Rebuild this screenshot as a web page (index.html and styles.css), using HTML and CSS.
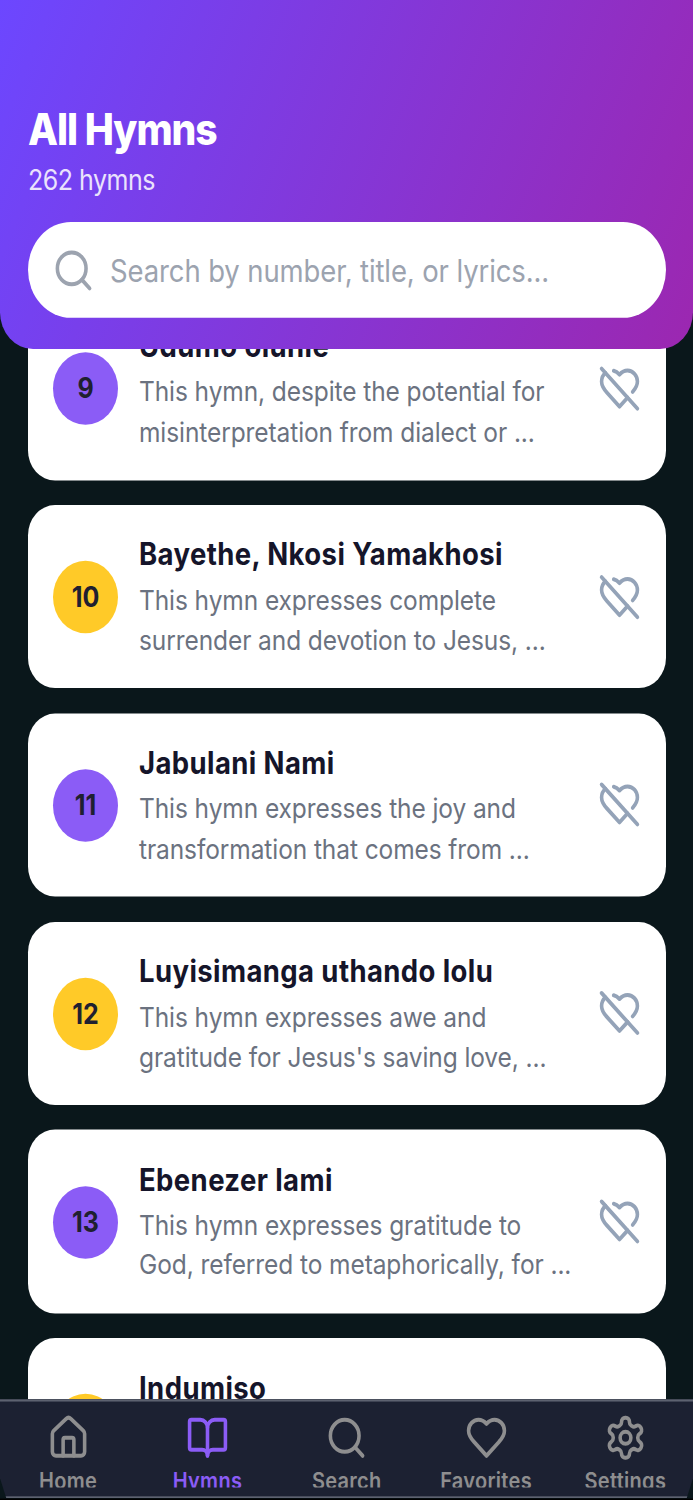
FILE: index.html
```html
<!DOCTYPE html>
<html lang="en">
<head>
<meta charset="utf-8">
<title>All Hymns</title>
<link rel="stylesheet" href="styles.css">
</head>
<body>
<svg class="defs" width="0" height="0" aria-hidden="true">
  <symbol id="search" viewBox="0 0 24 24"><circle cx="11" cy="11" r="8"/><path d="m21 21-4.3-4.3"/></symbol>
  <symbol id="heart-off" viewBox="0 0 24 24"><path d="M2 2 22 22"/><path d="M16.5 16.5 12 21l-7-7c-1.5-1.45-3-3.2-3-5.5a5.5 5.5 0 0 1 2.14-4.35"/><path d="M8.76 3.1c1.15.22 2.13.78 3.24 1.9 1.5-1.5 2.74-2 4.5-2A5.5 5.5 0 0 1 22 8.5c0 2.12-1.3 3.78-2.67 5.17"/></symbol>
</svg>
<div class="app">
  <header class="header">
    <h1 class="title">All Hymns</h1>
    <p class="count">262 hymns</p>
    <div class="search"><svg class="icon"><use href="#search"/></svg><span>Search by number, title, or lyrics...</span></div>
  </header>
  <main class="list">
    <article class="card">
      <div class="num violet">9</div>
      <div class="body"><h2>Udumo olunle</h2><p>This hymn, despite the potential for<br>misinterpretation from dialect or ...</p></div>
      <svg class="icon fav"><use href="#heart-off"/></svg>
    </article>
    <article class="card">
      <div class="num amber">10</div>
      <div class="body"><h2>Bayethe, Nkosi Yamakhosi</h2><p>This hymn expresses complete<br>surrender and devotion to Jesus, ...</p></div>
      <svg class="icon fav"><use href="#heart-off"/></svg>
    </article>
    <article class="card">
      <div class="num violet">11</div>
      <div class="body"><h2>Jabulani Nami</h2><p>This hymn expresses the joy and<br>transformation that comes from ...</p></div>
      <svg class="icon fav"><use href="#heart-off"/></svg>
    </article>
    <article class="card">
      <div class="num amber">12</div>
      <div class="body"><h2>Luyisimanga uthando lolu</h2><p>This hymn expresses awe and<br>gratitude for Jesus's saving love, ...</p></div>
      <svg class="icon fav"><use href="#heart-off"/></svg>
    </article>
    <article class="card">
      <div class="num violet">13</div>
      <div class="body"><h2>Ebenezer lami</h2><p>This hymn expresses gratitude to<br>God, referred to metaphorically, for ...</p></div>
      <svg class="icon fav"><use href="#heart-off"/></svg>
    </article>
    <article class="card">
      <div class="num amber"></div>
      <div class="body"><h2>Indumiso</h2></div>
    </article>
  </main>
  <nav class="tabs">
    <a class="tab"><svg class="icon" viewBox="0 0 24 24"><path d="M15 21v-8a1 1 0 0 0-1-1h-4a1 1 0 0 0-1 1v8"/><path d="M3 10a2 2 0 0 1 .709-1.528l7-5.999a2 2 0 0 1 2.582 0l7 5.999A2 2 0 0 1 21 10v9a2 2 0 0 1-2 2H5a2 2 0 0 1-2-2z"/></svg><span>Home</span></a>
    <a class="tab active"><svg class="icon" viewBox="0 0 24 24"><path d="M12 7v14"/><path d="M3 18a1 1 0 0 1-1-1V4a1 1 0 0 1 1-1h5a4 4 0 0 1 4 4 4 4 0 0 1 4-4h5a1 1 0 0 1 1 1v13a1 1 0 0 1-1 1h-6a3 3 0 0 0-3 3 3 3 0 0 0-3-3z"/></svg><span>Hymns</span></a>
    <a class="tab"><svg class="icon"><use href="#search"/></svg><span>Search</span></a>
    <a class="tab"><svg class="icon" viewBox="0 0 24 24"><path d="M19 14c1.49-1.46 3-3.21 3-5.5A5.5 5.5 0 0 0 16.5 3c-1.76 0-3 .5-4.5 2-1.5-1.5-2.74-2-4.5-2A5.5 5.5 0 0 0 2 8.5c0 2.3 1.5 4.05 3 5.5l7 7Z"/></svg><span>Favorites</span></a>
    <a class="tab"><svg class="icon" viewBox="0 0 24 24"><path d="M12.22 2h-.44a2 2 0 0 0-2 2v.18a2 2 0 0 1-1 1.73l-.43.25a2 2 0 0 1-2 0l-.15-.08a2 2 0 0 0-2.73.73l-.22.38a2 2 0 0 0 .73 2.73l.15.1a2 2 0 0 1 1 1.72v.51a2 2 0 0 1-1 1.74l-.15.09a2 2 0 0 0-.73 2.73l.22.38a2 2 0 0 0 2.73.73l.15-.08a2 2 0 0 1 2 0l.43.25a2 2 0 0 1 1 1.73V20a2 2 0 0 0 2 2h.44a2 2 0 0 0 2-2v-.18a2 2 0 0 1 1-1.73l.43-.25a2 2 0 0 1 2 0l.15.08a2 2 0 0 0 2.73-.73l.22-.39a2 2 0 0 0-.73-2.73l-.15-.08a2 2 0 0 1-1-1.74v-.5a2 2 0 0 1 1-1.74l.15-.09a2 2 0 0 0 .73-2.73l-.22-.38a2 2 0 0 0-2.73-.73l-.15.08a2 2 0 0 1-2 0l-.43-.25a2 2 0 0 1-1-1.73V4a2 2 0 0 0-2-2z"/><circle cx="12" cy="12" r="3"/></svg><span>Settings</span></a>
  </nav>
</div>
</body>
</html>
```
FILE: styles.css
```css
* { box-sizing: border-box; margin: 0; padding: 0; }
html { height: 1500px; overflow: hidden; background: #000; }
body { height: 1500px; overflow: hidden; font-family: Inter, "Liberation Sans", sans-serif; }
.defs { display: block; }

/* The whole screen is laid out at 1343.5px tall and stretched to the window. */
.app {
  width: 693px;
  height: 1343.5px;
  display: flex;
  flex-direction: column;
  overflow: hidden;
  background: #0a171b;
  transform: scale(1, 1.115);
  transform-origin: 0 0;
}
.icon {
  flex: none;
  width: 43px;
  height: 43px;
  fill: none;
  stroke: currentColor;
  stroke-width: 2;
  stroke-linecap: round;
  stroke-linejoin: round;
}

.header {
  flex: none;
  position: relative;
  z-index: 1;
  height: 313px;
  padding: 92px 27px 0 28px;
  border-radius: 0 0 33px 33px;
  background: linear-gradient(114.3deg, #6c47ff, #9c27b0);
  color: #fff;
}
.title { font-size: 39px; line-height: 48px; font-weight: 800; letter-spacing: -1px; }
.count { margin-top: 6px; font-size: 25px; line-height: 30px; letter-spacing: -0.5px; opacity: .85; }
.search {
  display: flex;
  align-items: center;
  gap: 15px;
  height: 86px;
  margin-top: 23px;
  padding-left: 24px;
  border-radius: 43px;
  background: #fff;
  color: #9ca3af;
  font-size: 27.5px;
  letter-spacing: -0.12px;
}
.search span { padding-top: 2px; }

.list { flex: 1; min-height: 0; margin-top: -47px; overflow: hidden; padding: 0 27px 0 28px; }
.card {
  display: flex;
  align-items: flex-start;
  height: 164.5px;
  margin-bottom: 22.35px;
  padding: 0 25px;
  border-radius: 27px;
  background: #fff;
}
.num {
  flex: none;
  width: 65px;
  height: 65px;
  margin: 50.2px 21px 0 0;
  border-radius: 50%;
  color: #1f2030;
  font-size: 25px;
  line-height: 65px;
  font-weight: 700;
  text-align: center;
}
.violet { background: #8b5cf6; }
.amber { background: #ffca28; }
.body { flex: 1; padding-top: 27.3px; white-space: nowrap; }
.body h2 { color: #15152a; font-size: 27.5px; line-height: 34px; font-weight: 700; letter-spacing: 0.4px; }
.body p { margin-top: 7px; color: #6b7280; font-size: 24.5px; line-height: 35.7px; letter-spacing: -0.09px; }
.fav { margin-top: 60.7px; color: #94a3b8; }

.tabs {
  flex: none;
  display: flex;
  height: 89px;
  border-top: 2px solid #5d6270;
  border-bottom: 2px solid #5d6270;
  background: #1c2132;
  color: #8e8e8f;
  clip-path: polygon(0 0, 100% 0, 100% 80%, 99.1% 100%, .9% 100%, 0 80%);
}
.tab { flex: none; width: 139.3px; display: flex; flex-direction: column; align-items: center; padding-top: 11px; }
.tab:first-child { margin-left: -1.5px; }
.tab span { height: 20px; margin-top: 3px; overflow: hidden; font-size: 20px; line-height: 28px; font-weight: 600; letter-spacing: 0.3px; }
.active { color: #8b5cf6; }
```
